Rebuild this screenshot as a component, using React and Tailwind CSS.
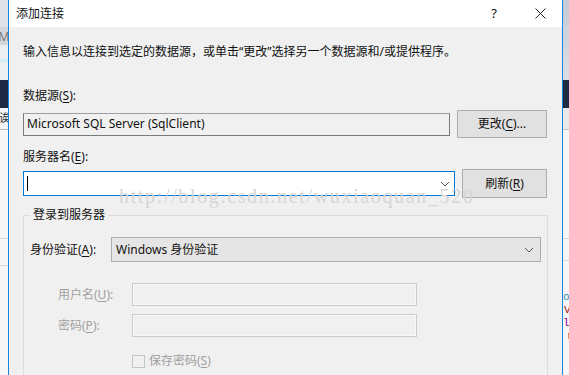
import React from "react"

const font = { fontFamily: '"Noto Sans", "Noto Sans CJK SC", sans-serif' }

const U = ({ children }) => <span className="underline underline-offset-2">{children}</span>

const Chevron = () => (
  <svg width="10" height="6" viewBox="0 0 10 6" className="shrink-0">
    <polyline points="1,1 5,5 9,1" fill="none" stroke="#555" strokeWidth="1" />
  </svg>
)

const Button = ({ children, className = "" }) => (
  <div className={`flex items-center justify-center bg-[#e1e1e1] border border-[#adadad] text-[12px] text-[#111] ${className}`}>
    {children}
  </div>
)

const LeftStrip = () => (
  <div className="w-[8px] shrink-0 flex flex-col bg-[#f3f3f3] overflow-hidden">
    <div className="h-[27px] bg-[#dfe1e7]" />
    <div className="h-[18px] bg-[#d3d5db] text-[13px] leading-[18px] text-[#777] -ml-[2px]">M</div>
    <div className="h-[14px] bg-[#eceef2]" />
    <div className="h-[3px] bg-[#cfeff3]" />
    <div className="h-[18px] bg-[#eceef2]" />
    <div className="h-[28px] bg-[#1f2a45]" />
    <div className="h-[22px] bg-[#f4f4f4] border-b border-[#b9b9b9] text-[11px] leading-[20px] text-[#333] -ml-[1px]">诶</div>
    <div className="h-[109px] bg-[#f7f7f7] border-b border-[#d8d8d8]" />
    <div className="h-[27px] bg-[#f7f7f7] border-b border-[#d8d8d8]" />
    <div className="flex-1 bg-[#f7f7f7]" />
  </div>
)

const RightStrip = () => (
  <div className="w-[7px] shrink-0 flex flex-col bg-[#f4f4f4] overflow-hidden">
    <div className="h-[80px] bg-gradient-to-b from-[#c6cad6] to-[#dcdfe7]" />
    <div className="h-[28px] bg-[#1f2a45]" />
    <div className="h-[22px] bg-[#e9e9e9] border-b border-[#c4c4c4]" />
    <div className="h-[109px] bg-[#f6f6f6] border-b border-[#dadada]" />
    <div className="h-[22px] bg-[#f6f6f6] border-b border-[#dadada]" />
    <div className="flex-1 bg-[#f6f6f6] pt-[30px] text-[11px] leading-[13px] font-mono">
      <div className="text-[#2b91af]">ol</div>
      <div className="text-[#a31515] pl-[1px]">V</div>
      <div className="text-[#8b008b]">l</div>
      <div className="text-[#a31515] pl-[4px]">r</div>
    </div>
  </div>
)

export default function App() {
  return (
    <div className="flex w-[569px] h-[375px] overflow-hidden bg-[#f0f0f0]" style={font}>
      <LeftStrip />

      <div className="relative flex-1 flex flex-col border-l border-r border-[#1883d7] bg-[#f0f0f0]">
        {/* title bar */}
        <div className="h-[27px] shrink-0 bg-white flex items-center pl-[7px] text-[12px] text-[#111]">
          <span>添加连接</span>
          <span className="ml-auto w-[46px] text-center text-[13px]">?</span>
          <span className="w-[46px] flex justify-center mr-[-1px]">
            <svg width="11" height="11" viewBox="0 0 11 11">
              <path d="M0.5 0.5 L10.5 10.5 M10.5 0.5 L0.5 10.5" stroke="#222" strokeWidth="1" />
            </svg>
          </span>
        </div>

        <div className="flex flex-col pl-[14px] pr-[14px] text-[12px] leading-[16px] text-[#111]">
          <p className="mt-[17px]">输入信息以连接到选定的数据源，或单击“更改”选择另一个数据源和/或提供程序。</p>

          <div className="mt-[28px]">数据源(<U>S</U>):</div>
          <div className="mt-[6px] flex items-center h-[28px]">
            <div className="w-[427px] h-[23px] border border-[#7a7a7a] border-t-[#a0a0a0] bg-[#f0f0f0] flex items-center pl-[3px]">
              Microsoft SQL Server (SqlClient)
            </div>
            <Button className="ml-[7px] w-[90px] h-[28px]">更改(<U>C</U>)...</Button>
          </div>

          <div className="mt-[11px]">服务器名(<U>E</U>):</div>
          <div className="mt-[4px] flex items-center h-[29px]">
            <div className="w-[432px] h-[25px] border border-[#0078d7] bg-white flex items-center pl-[3px] pr-[4px]">
              <div className="w-[1px] h-[15px] bg-black" />
              <div className="ml-auto"><Chevron /></div>
            </div>
            <Button className="ml-[7px] w-[85px] h-[29px]">刷新(<U>R</U>)</Button>
          </div>

          {/* group box */}
          <div className="relative mt-[17px] border border-[#dcdcdc] border-b-0 h-[200px] w-[525px] pl-[6px] pr-[6px]">
            <div className="absolute -top-[9px] left-[6px] bg-[#f0f0f0] px-[3px]">登录到服务器</div>
            <div className="mt-[21px] flex items-center">
              <div className="w-[81px]">身份验证(<U>A</U>):</div>
              <div className="w-[430px] h-[25px] bg-[#e5e5e5] border border-[#adadad] flex items-center pl-[4px] pr-[6px]">
                <span>Windows 身份验证</span>
                <div className="ml-auto"><Chevron /></div>
              </div>
            </div>

            <div className="mt-[21px] flex items-center text-[#a0a0a0]">
              <div className="w-[102px] shrink-0 pl-[28px] whitespace-nowrap">用户名(<U>U</U>):</div>
              <div className="w-[285px] h-[23px] border border-[#cccccc] bg-[#f0f0f0] shadow-[inset_0_0_0_1px_#f8f8f8]" />
            </div>
            <div className="mt-[8px] flex items-center text-[#a0a0a0]">
              <div className="w-[102px] shrink-0 pl-[28px] whitespace-nowrap">密码(<U>P</U>):</div>
              <div className="w-[285px] h-[23px] border border-[#cccccc] bg-[#f0f0f0] shadow-[inset_0_0_0_1px_#f8f8f8]" />
            </div>
            <div className="mt-[16px] flex items-center text-[#a0a0a0] pl-[102px]">
              <div className="w-[13px] h-[13px] border border-[#c4c4c4] bg-[#f0f0f0]" />
              <span className="ml-[4px]">保存密码(<U>S</U>)</span>
            </div>
          </div>
        </div>

        {/* watermark */}
        <div
          className="absolute left-[110px] top-[184px] text-[20px] leading-[24px] tracking-[1.65px] text-[#d6d6d6] pointer-events-none whitespace-nowrap"
          style={{ fontFamily: '"Liberation Serif", serif' }}
        >
          http://blog.csdn.net/wuxiaoquan_520
        </div>
      </div>

      <RightStrip />
    </div>
  )
}
